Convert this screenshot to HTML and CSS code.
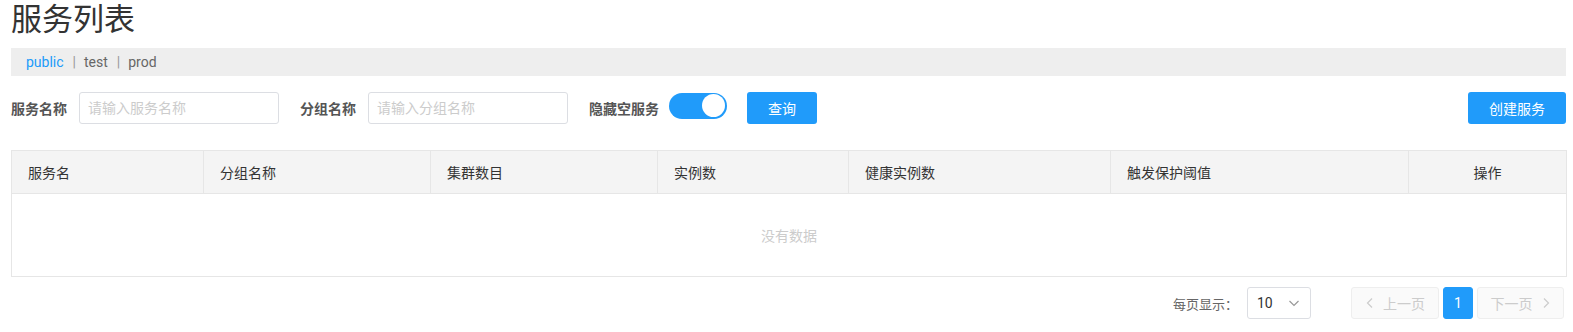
FILE: index.html
```html
<!DOCTYPE html>
<html>
<head>
<meta charset="UTF-8">
<title>服务列表</title>
<link rel="stylesheet" href="styles.css">
</head>
<body>
<div class="main_container">
	<h1 class="page_title">服务列表</h1>
	<!-- namespace -->
	<div class="namespace_bar">
		<span class="ns_item ns_active">public</span>
		<span class="ns_sep">|</span>
		<span class="ns_item">test</span>
		<span class="ns_sep">|</span>
		<span class="ns_item">prod</span>
	</div>
	<!-- filter -->
	<div class="filter_row">
		<label class="filter_label">服务名称</label>
		<input class="filter_input" type="text" placeholder="请输入服务名称">
		<label class="filter_label">分组名称</label>
		<input class="filter_input" type="text" placeholder="请输入分组名称">
		<label class="filter_label">隐藏空服务</label>
		<div class="switch_on"><span class="switch_knob"></span></div>
		<button class="btn_primary btn_query">查询</button>
		<button class="btn_primary btn_create">创建服务</button>
	</div>
	<!-- table -->
	<table class="service_table">
		<colgroup>
			<col style="width:192px">
			<col style="width:227px">
			<col style="width:227px">
			<col style="width:191px">
			<col style="width:262px">
			<col style="width:298px">
			<col style="width:158px">
		</colgroup>
		<thead>
			<tr>
				<th>服务名</th>
				<th>分组名称</th>
				<th>集群数目</th>
				<th>实例数</th>
				<th>健康实例数</th>
				<th>触发保护阈值</th>
				<th class="col_center">操作</th>
			</tr>
		</thead>
		<tbody>
			<tr><td colspan="7" class="empty_cell">没有数据</td></tr>
		</tbody>
	</table>
	<!-- pagination -->
	<div class="pagination">
		<span class="page_size_label">每页显示：</span>
		<div class="page_select">
			<span>10</span>
			<svg width="12" height="12" viewBox="0 0 12 12"><polyline points="1.5,4 6,8.5 10.5,4" fill="none" stroke="#999" stroke-width="1.2"/></svg>
		</div>
		<div class="page_btns">
			<button class="page_btn page_prev" disabled>
				<svg width="10" height="12" viewBox="0 0 10 12"><polyline points="7,1.5 2.5,6 7,10.5" fill="none" stroke="#ccc" stroke-width="1.2"/></svg>
				上一页
			</button>
			<button class="page_btn page_current">1</button>
			<button class="page_btn page_next" disabled>
				下一页
				<svg width="10" height="12" viewBox="0 0 10 12"><polyline points="3,1.5 7.5,6 3,10.5" fill="none" stroke="#ccc" stroke-width="1.2"/></svg>
			</button>
		</div>
	</div>
</div>
</body>
</html>
```

FILE: styles.css
```css
body {
	margin: 0;
	font-family: Roboto, "Noto Sans CJK SC", sans-serif;
	color: #333;
	background: #fff;
}

.main_container {
	padding: 0 7px 0 11px;
}

.page_title {
	margin: 0;
	font-size: 31px;
	font-weight: normal;
	line-height: 40px;
	height: 40px;
	color: #333;
	padding-left: 0;
}

/*неймспейсы*/
.namespace_bar {
	margin-top: 8px;
	height: 28px;
	background: #eee;
	display: flex;
	align-items: center;
	padding-left: 15px;
	font-size: 14px;
}
.ns_item {
	color: #666;
	cursor: pointer;
}
.ns_active {
	color: #209bfa;
}
.ns_sep {
	color: #999;
	margin: 0 8px 0 9px;
	font-size: 14px;
}

/*фильтр*/
.filter_row {
	margin-top: 16px;
	display: flex;
	align-items: center;
	height: 32px;
}
.filter_label {
	font-size: 14px;
	font-weight: bold;
	color: #555;
	margin-right: 12px;
}
.filter_input {
	width: 200px;
	height: 32px;
	box-sizing: border-box;
	border: 1px solid #dcdee3;
	border-radius: 3px;
	padding: 0 8px;
	font-size: 14px;
	font-family: inherit;
	margin-right: 21px;
	outline: none;
}
.filter_input::placeholder {
	color: #ccc;
}
.switch_on {
	width: 58px;
	height: 26px;
	border-radius: 13px;
	background: #209bfa;
	display: flex;
	align-items: center;
	justify-content: flex-end;
	box-sizing: border-box;
	padding-right: 2px;
	margin-left: -2px;
	margin-top: -5px;
}
.switch_knob {
	width: 23px;
	height: 23px;
	border-radius: 50%;
	background: #fff;
}
.btn_primary {
	height: 32px;
	border: none;
	border-radius: 3px;
	background: #209bfa;
	color: #fff;
	font-size: 14px;
	font-family: inherit;
	cursor: pointer;
}
.btn_query {
	width: 70px;
	margin-left: 20px;
}
.btn_create {
	width: 98px;
	margin-left: auto;
}

/*таблица*/
.service_table {
	margin-top: 26px;
	width: 1555px;
	border-collapse: collapse;
	table-layout: fixed;
	border: 1px solid #e6e6e6;
	font-size: 14px;
}
.service_table th {
	background: #f4f4f4;
	height: 42px;
	padding: 0 16px;
	text-align: left;
	font-weight: normal;
	color: #333;
	border: 1px solid #e6e6e6;
}
.service_table .col_center {
	text-align: center;
}
.empty_cell {
	height: 80px;
	text-align: center;
	color: #ccc;
	font-size: 14px;
}

/*пагинация*/
.pagination {
	margin-top: 10px;
	margin-right: 2px;
	display: flex;
	align-items: center;
	justify-content: flex-end;
	font-size: 13px;
}
.page_size_label {
	color: #666;
	margin-right: 9px;
}
.page_select {
	width: 64px;
	height: 32px;
	box-sizing: border-box;
	border: 1px solid #dcdee3;
	border-radius: 3px;
	display: flex;
	align-items: center;
	justify-content: space-between;
	padding: 0 10px 0 9px;
	font-size: 14px;
	color: #333;
}
.page_btns {
	display: flex;
	margin-left: 40px;
}
.page_btn {
	height: 32px;
	box-sizing: border-box;
	border: 1px solid #eee;
	border-radius: 3px;
	background: #fafafa;
	color: #ccc;
	font-size: 14px;
	font-family: inherit;
	display: flex;
	align-items: center;
	justify-content: center;
	gap: 8px;
	padding: 0;
}
.page_prev {
	width: 88px;
}
.page_next {
	width: 87px;
}
.page_current {
	width: 30px;
	margin: 0 4px;
	background: #209bfa;
	border-color: #209bfa;
	color: #fff;
}
```
